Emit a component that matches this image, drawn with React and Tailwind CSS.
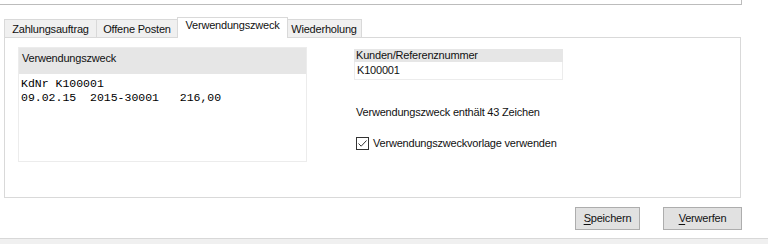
import React from "react";

const tabs = [
  { label: "Zahlungsauftrag", w: "w-[93px]" },
  { label: "Offene Posten", w: "w-[82px]" },
  { label: "Verwendungszweck", w: "w-[111px]", active: true },
  { label: "Wiederholung", w: "w-[76px]" },
];

function Tab({ label, w, active }) {
  if (active) {
    return (
      <div
        className={`${w} -mx-[1px] h-[21px] -mb-[1px] relative z-10 bg-white border border-b-0 border-[#d9d9d9] flex items-start justify-center pt-[2px]`}
      >
        {label}
      </div>
    );
  }
  return (
    <div
      className={`${w} h-[18px] bg-[#f0f0f0] border border-b-0 border-[#d9d9d9] -ml-[1px] first:ml-0 flex items-center justify-center pt-[1px]`}
    >
      {label}
    </div>
  );
}

function Button({ first, rest, w }) {
  return (
    <button
      className={`${w} h-[23px] bg-[#e1e1e1] border border-[#adadad] flex items-center justify-center`}
    >
      <span>
        <span className="underline underline-offset-2">{first}</span>
        {rest}
      </span>
    </button>
  );
}

const App = () => {
  return (
    <div
      className="w-[768px] h-[244px] bg-white flex flex-col text-[11px] tracking-[-0.2px] text-[#111111] leading-none overflow-hidden"
      style={{ fontFamily: '"Liberation Sans", Arial, sans-serif' }}
    >
      <div className="h-[5px] w-[742px] border-b border-r border-[#bcbcbc]" />

      <div className="ml-[4px] mt-[12px] flex items-end h-[20px]">
        {tabs.map((t) => (
          <Tab key={t.label} {...t} />
        ))}
      </div>

      <div className="ml-[4px] w-[737px] h-[161px] border border-[#d9d9d9] flex pt-[9px] pl-[13px]">
        <div className="w-[289px] h-[115px] border border-[#ececec] flex flex-col">
          <div className="h-[26px] bg-[#e6e6e6] pl-[3px] pt-[5px]">
            Verwendungszweck
          </div>
          <div
            className="pl-[2px] pt-[3px] text-[11.5px] tracking-normal leading-[14px] whitespace-pre text-black"
            style={{ fontFamily: '"Liberation Mono", "Courier New", monospace' }}
          >
            {"KdNr K100001\n09.02.15  2015-30001   216,00"}
          </div>
        </div>

        <div className="ml-[47px] pt-[2px] flex flex-col">
          <div className="w-[209px] h-[13px] bg-[#e6e6e6] pl-[2px] pt-[1px]">
            Kunden/Referenznummer
          </div>
          <div className="w-[209px] h-[18px] border border-t-0 border-[#ececec] pl-[2px] flex items-center">
            K100001
          </div>
          <div className="pl-[2px] mt-[27px]">
            Verwendungszweck enthält 43 Zeichen
          </div>
          <div className="flex items-center mt-[19px] pl-[2px]">
            <div className="w-[13px] h-[13px] border border-[#333333] bg-white flex items-center justify-center">
              <svg width="11" height="11" viewBox="0 0 11 11" fill="none">
                <path
                  d="M1.5 5.5 L4.2 8.2 L9.5 2.5"
                  stroke="#333333"
                  strokeWidth="1"
                />
              </svg>
            </div>
            <span className="ml-[4px]">Verwendungszweckvorlage verwenden</span>
          </div>
        </div>
      </div>

      <div className="flex justify-end gap-[23px] w-[742px] mt-[9px]">
        <Button first="S" rest="peichern" w="w-[65px]" />
        <Button first="V" rest="erwerfen" w="w-[79px]" />
      </div>

      <div className="mt-[8px] flex-1 border-t border-[#d8d8d8] bg-[#f0f0f0]" />
    </div>
  );
};

export default App;
